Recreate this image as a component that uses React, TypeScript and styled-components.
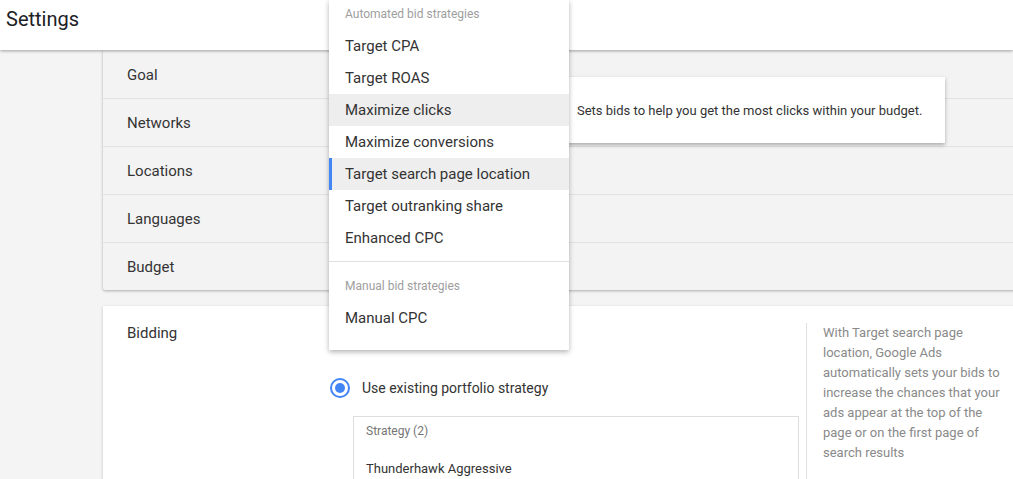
import styled, { createGlobalStyle } from 'styled-components'

/* --------------------- Style --------------------- */
const Global = createGlobalStyle`
  html, body {
    margin: 0;
    padding: 0;
    background: #f4f4f4;
    font-family: Roboto, 'Liberation Sans', Arial, sans-serif;
    overflow: hidden;
  }
`
const Page = styled.div`
  position: relative;
  width: 1013px;
  height: 479px;
  overflow: hidden;
  background: #f4f4f4;
`
const Header = styled.header`
  position: relative;
  z-index: 2;
  height: 50px;
  background: #fff;
  box-shadow: 0 1px 3px rgba(0, 0, 0, 0.35);
  display: flex;
  align-items: flex-start;
  padding: 7px 0 0 6px;
  box-sizing: border-box;
  > h1 {
    margin: 0;
    font-size: 20px;
    font-weight: 400;
    line-height: 24px;
    color: #202124;
  }
`
const Main = styled.main`
  display: flex;
  flex-direction: column;
  gap: 16px;
  padding-left: 103px;
  margin-right: -20px;
`
const SummaryCard = styled.section`
  background: #f3f3f3;
  box-shadow: 0 1px 3px rgba(0, 0, 0, 0.3);
  border-radius: 0 0 2px 2px;
`
const Row = styled.div`
  height: 48px;
  display: flex;
  align-items: center;
  padding: 1px 0 0 24px;
  font-size: 15px;
  color: #333;
  border-top: 1px solid #e2e2e2;
  box-sizing: border-box;
  &:first-child {
    border-top: none;
  }
`
const BiddingCard = styled.section`
  background: #fff;
  box-shadow: 0 1px 3px rgba(0, 0, 0, 0.2);
  height: 200px;
  display: grid;
  grid-template-columns: 227px 476px 1fr;
  padding-top: 17px;
  box-sizing: border-box;
`
const Label = styled.div`
  padding-left: 24px;
  font-size: 15px;
  line-height: 20px;
  color: #333;
`
const Content = styled.div`
  padding-top: 50px;
`
const RadioRow = styled.label`
  display: flex;
  align-items: center;
  gap: 12px;
  height: 30px;
  font-size: 14px;
  color: #333;
`
const Radio = styled.span`
  width: 20px;
  height: 20px;
  border-radius: 50%;
  border: 2px solid #4285f4;
  box-sizing: border-box;
  display: flex;
  align-items: center;
  justify-content: center;
  &::after {
    content: '';
    width: 10px;
    height: 10px;
    border-radius: 50%;
    background: #4285f4;
  }
`
const StrategyBox = styled.div`
  margin: 13px 0 0 23px;
  width: 446px;
  height: 80px;
  border: 1px solid #dedede;
  box-sizing: border-box;
  padding: 6px 0 0 12px;
  > .title {
    font-size: 12px;
    line-height: 16px;
    color: #757575;
  }
  > .name {
    margin-top: 22px;
    font-size: 13px;
    line-height: 16px;
    color: #333;
  }
`
const Help = styled.aside`
  border-left: 1px solid #e0e0e0;
  padding: 0 0 0 16px;
  width: 186px;
  font-size: 13px;
  line-height: 20px;
  color: #8a8a8a;
`
const Menu = styled.div`
  position: absolute;
  z-index: 5;
  left: 329px;
  top: 0;
  width: 240px;
  background: #fff;
  box-shadow: 0 2px 5px rgba(0, 0, 0, 0.3);
  padding-bottom: 16px;
`
const Group = styled.div<{ $top?: boolean }>`
  height: ${(p) => (p.$top ? '30px' : '40px')};
  padding: ${(p) => (p.$top ? '0' : '8px')} 0 0 16px;
  box-sizing: border-box;
  line-height: ${(p) => (p.$top ? '29px' : '32px')};
  font-size: 12px;
  color: #9e9e9e;
`
const Item = styled.div<{ $hover?: boolean; $selected?: boolean }>`
  height: 32px;
  line-height: 32px;
  padding-left: 16px;
  font-size: 15px;
  color: #333;
  background: ${(p) => (p.$hover || p.$selected ? '#eeeeee' : '#fff')};
  box-shadow: ${(p) => (p.$selected ? 'inset 3px 0 0 #4285f4' : 'none')};
`
const Divider = styled.hr`
  margin: 7px 0 0;
  border: none;
  border-top: 1px solid #e0e0e0;
`
const Tooltip = styled.div`
  position: absolute;
  z-index: 4;
  left: 553px;
  top: 77px;
  width: 392px;
  height: 66px;
  background: #fff;
  box-shadow: 0 2px 4px rgba(0, 0, 0, 0.3);
  display: flex;
  align-items: center;
  padding-left: 24px;
  box-sizing: border-box;
  font-size: 13px;
  color: #333;
`
/* ------------------------------------------------- */

const sections = ['Goal', 'Networks', 'Locations', 'Languages', 'Budget']
const automated = [
  'Target CPA',
  'Target ROAS',
  'Maximize clicks',
  'Maximize conversions',
  'Target search page location',
  'Target outranking share',
  'Enhanced CPC',
]

const App: React.FC = () => {
  return (
    <Page>
      <Global />
      <Header>
        <h1>Settings</h1>
      </Header>
      <Main>
        <SummaryCard>
          {sections.map((s) => (
            <Row key={s}>{s}</Row>
          ))}
        </SummaryCard>
        <BiddingCard>
          <Label>Bidding</Label>
          <Content>
            <RadioRow>
              <Radio />
              Use existing portfolio strategy
            </RadioRow>
            <StrategyBox>
              <div className="title">Strategy (2)</div>
              <div className="name">Thunderhawk Aggressive</div>
            </StrategyBox>
          </Content>
          <Help>
            With Target search page location, Google Ads automatically sets
            your bids to increase the chances that your ads appear at the top
            of the page or on the first page of search results
          </Help>
        </BiddingCard>
      </Main>
      <Menu>
        <Group $top>Automated bid strategies</Group>
        {automated.map((a) => (
          <Item
            key={a}
            $hover={a === 'Maximize clicks'}
            $selected={a === 'Target search page location'}
          >
            {a}
          </Item>
        ))}
        <Divider />
        <Group>Manual bid strategies</Group>
        <Item>Manual CPC</Item>
      </Menu>
      <Tooltip>Sets bids to help you get the most clicks within your budget.</Tooltip>
    </Page>
  )
}
export default App
